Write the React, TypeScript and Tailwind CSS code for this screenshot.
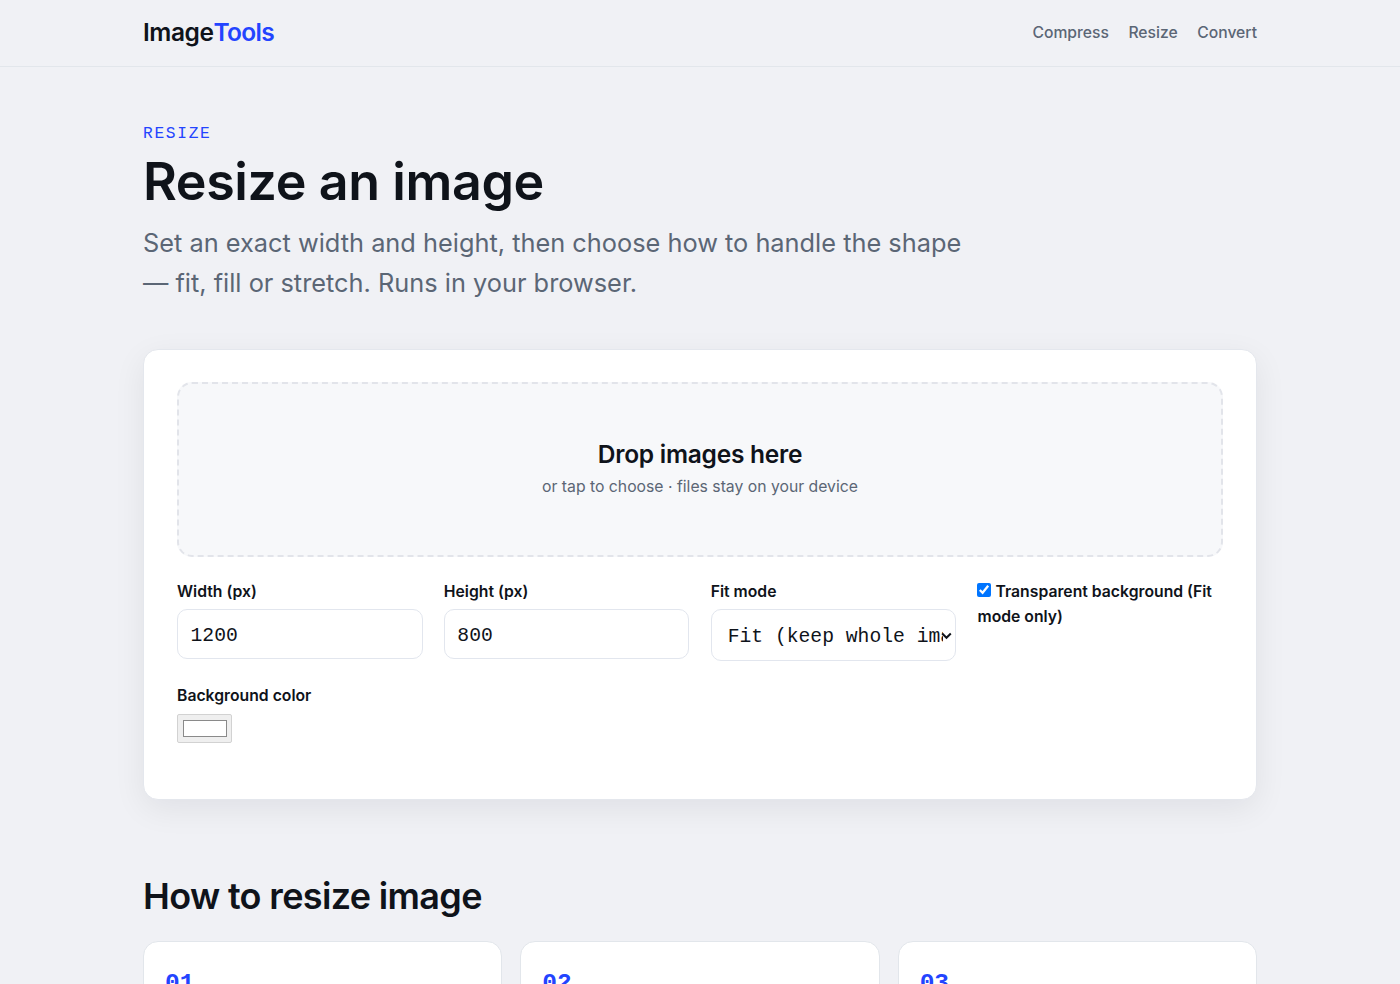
const navLinks = ["Compress", "Resize", "Convert"];

const sizeFields = [
  { id: "width", label: "Width (px)", value: "1200" },
  { id: "height", label: "Height (px)", value: "800" },
];

const steps = ["01", "02", "03"];

const Header = () => {
  return (
    <header className="h-[67px] border-b border-[#e2e6eb]">
      <div className="mx-auto flex h-[66px] w-[1114px] items-center justify-between">
        <a
          href="#"
          className="-mt-0.5 text-[24.5px] font-semibold tracking-[-0.45px] text-[#0f131a]"
        >
          Image
          <span className="tracking-[-0.7px] text-[#2344ff]">Tools</span>
        </a>

        <nav className="flex gap-[19.5px] text-[15.7px] font-medium text-[#5b6675]">
          {navLinks.map((link) => (
            <a key={link} href="#">
              {link}
            </a>
          ))}
        </nav>
      </div>
    </header>
  );
};

const Hero = () => {
  return (
    <section className="pt-[55px]">
      <p className="font-['Liberation_Mono',monospace] text-[16.2px] leading-6 tracking-[1.7px] text-[#2344ff]">
        RESIZE
      </p>
      <h1 className="mt-[6px] text-[52px] leading-[60px] font-semibold tracking-[-0.4px] whitespace-nowrap text-[#0f131a]">
        Resize an image
      </h1>
      <p className="mt-[11px] text-[25.35px] leading-[40.4px] whitespace-nowrap text-[#5b6675]">
        Set an exact width and height, then choose how to handle the shape
        <br />— fit, fill or stretch. Runs in your browser.
      </p>
    </section>
  );
};

const Resizer = () => {
  return (
    <section className="mt-[45px] h-[451px] rounded-[15px] border border-[#e4e7ed] bg-white px-[33px] pt-[32px] shadow-[0_9px_32px_rgba(15,19,26,0.07)]">
      <div className="flex h-[175px] flex-col items-center rounded-[15px] border-2 border-dashed border-[#e2e4ea] bg-[#f7f8fa] pt-[53px]">
        <h2 className="text-[24.5px] leading-[34px] font-semibold tracking-[-0.25px] text-[#0f131a]">
          Drop images here
        </h2>
        <p className="mt-[3px] text-[15.75px] leading-[26px] text-[#5b6675]">
          or tap to choose · files stay on your device
        </p>
      </div>

      <div className="mt-[22px] grid grid-cols-4 gap-x-[21.3px] text-[15.75px] font-semibold text-[#0f131a]">
        {sizeFields.map(({ id, label, value }) => (
          <div key={id}>
            <label htmlFor={id} className="block leading-[26px]">
              {label}
            </label>
            <input
              id={id}
              defaultValue={value}
              className="mt-[4px] block h-[50px] w-full rounded-[10px] border border-[#e2e6ee] bg-white px-[12.5px] pt-1 font-['Liberation_Mono',monospace] text-[19.7px] font-normal"
            />
          </div>
        ))}

        <div>
          <label htmlFor="fit" className="block leading-[26px]">
            Fit mode
          </label>
          <div className="relative mt-[4px] mb-px">
            <select
              id="fit"
              className="block h-[52px] w-full appearance-none rounded-[10px] border border-[#e2e6ee] bg-white pt-[5px] pr-[12px] pl-[16px] font-['Liberation_Mono',monospace] text-[19.7px] font-normal"
            >
              <option>Fit (keep whole image)</option>
              <option>Fill (crop to size)</option>
              <option>Stretch</option>
            </select>
            <svg
              viewBox="0 0 11 8"
              className="pointer-events-none absolute top-[23px] right-[4px] h-2 w-[11px]"
              fill="none"
              stroke="#0f131a"
              strokeWidth="2"
            >
              <path d="M1.2 1.5 5.5 5.8 9.8 1.5" />
            </svg>
          </div>
        </div>

        <label className="block leading-[25.5px]">
          <input
            type="checkbox"
            defaultChecked
            className="mr-[4px] size-[14px]"
          />
          Transparent background (Fit mode only)
        </label>
      </div>

      <div className="mt-[21px] text-[15.75px] font-semibold text-[#0f131a]">
        <label htmlFor="background" className="block leading-[26px]">
          Background color
        </label>
        <button
          id="background"
          className="mt-[5px] flex h-[29px] w-[55px] items-center justify-center rounded-[2px] border border-[#d2d2d2] bg-[#efefef]"
        >
          <span className="h-[17px] w-[44px] border border-[#8a8a8a] bg-white" />
        </button>
      </div>
    </section>
  );
};

const HowTo = () => {
  return (
    <section className="mt-[73px]">
      <h2 className="text-[36px] leading-[46px] font-semibold tracking-[-0.65px] text-[#0f131a]">
        How to resize image
      </h2>
      <div className="mt-[22px] grid grid-cols-3 gap-[18px]">
        {steps.map((step) => (
          <div
            key={step}
            className="h-[190px] rounded-[15px] border border-[#e2e6eb] bg-white px-[21px] pt-[23px]"
          >
            <span className="block font-['Liberation_Mono',monospace] text-[24.5px] leading-[38px] font-bold text-[#2344ff]">
              {step}
            </span>
          </div>
        ))}
      </div>
    </section>
  );
};

export default function App() {
  return (
    <div className="h-[984px] overflow-hidden bg-[#f0f1f5] font-['Inter',sans-serif]">
      <Header />
      <main className="mx-auto w-[1114px]">
        <Hero />
        <Resizer />
        <HowTo />
      </main>
    </div>
  );
}
